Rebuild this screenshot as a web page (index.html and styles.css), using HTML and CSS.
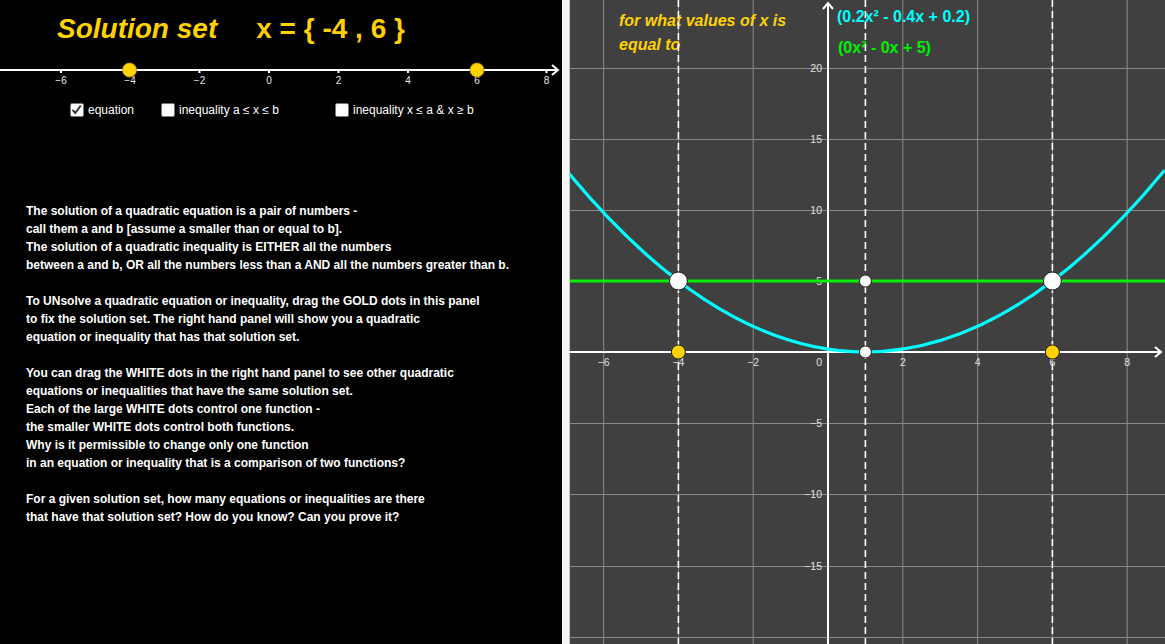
FILE: index.html
```html
<!DOCTYPE html>
<html>
<head>
<meta charset="utf-8">
<link rel="stylesheet" href="styles.css">
</head>
<body>
<div class="app">
  <section class="left">
    <div class="title">
      <span class="title-label">Solution set</span>
      <span class="title-set">x = { -4 , 6 }</span>
    </div>
    <svg class="numberline" width="562" height="30" viewBox="0 0 562 30">
      <line x1="0" y1="10" x2="558" y2="10" stroke="#fff" stroke-width="2"/>
      <polyline points="552,5 558,10 552,15" fill="none" stroke="#fff" stroke-width="2"/>
      <g stroke="#fff" stroke-width="2">
        <line x1="61" y1="10" x2="61" y2="13"/>
        <line x1="130" y1="10" x2="130" y2="13"/>
        <line x1="199.5" y1="10" x2="199.5" y2="13"/>
        <line x1="269" y1="10" x2="269" y2="13"/>
        <line x1="338.5" y1="10" x2="338.5" y2="13"/>
        <line x1="408" y1="10" x2="408" y2="13"/>
        <line x1="477" y1="10" x2="477" y2="13"/>
        <line x1="546.5" y1="10" x2="546.5" y2="13"/>
      </g>
      <g class="nl-labels" text-anchor="middle">
        <text x="61" y="24">−6</text>
        <text x="130" y="24">−4</text>
        <text x="199.5" y="24">−2</text>
        <text x="269" y="24">0</text>
        <text x="338.5" y="24">2</text>
        <text x="408" y="24">4</text>
        <text x="477" y="24">6</text>
        <text x="546.5" y="24">8</text>
      </g>
      <circle cx="129.5" cy="10" r="7" fill="#ffd200" stroke="#b8960a" stroke-width="0.8"/>
      <circle cx="477" cy="10" r="7" fill="#ffd200" stroke="#b8960a" stroke-width="0.8"/>
    </svg>
    <div class="checks">
      <label class="check">
        <span class="box"><svg width="13" height="13" viewBox="0 0 13 13"><polyline points="2.5,6.8 5.3,10 10.8,2.5" fill="none" stroke="#333" stroke-width="2"/></svg></span>
        <span>equation</span>
      </label>
      <label class="check">
        <span class="box"></span>
        <span>inequality a ≤ x ≤ b</span>
      </label>
      <label class="check">
        <span class="box"></span>
        <span>inequality x ≤ a &amp; x ≥ b</span>
      </label>
    </div>
    <div class="text">
      <p>The solution of a quadratic equation is a pair of numbers -<br>
      call them a and b [assume a smaller than or equal to b].<br>
      The solution of a quadratic inequality is EITHER all the numbers<br>
      between a and b, OR all the numbers less than a AND all the numbers greater than b.</p>
      <p>To UNsolve a quadratic equation or inequality, drag the GOLD dots in this panel<br>
      to fix the solution set. The right hand panel will show you a quadratic<br>
      equation or inequality that has that solution set.</p>
      <p>You can drag the WHITE dots in the right hand panel to see other quadratic<br>
      equations or inequalities that have the same solution set.<br>
      Each of the large WHITE dots control one function -<br>
      the smaller WHITE dots control both functions.<br>
      Why is it permissible to change only one function<br>
      in an equation or inequality that is a comparison of two functions?</p>
      <p>For a given solution set, how many equations or inequalities are there<br>
      that have that solution set? How do you know? Can you prove it?</p>
    </div>
  </section>
  <div class="divider"></div>
  <section class="graph">
    <svg width="595" height="644" viewBox="0 0 595 644">
      <rect width="595" height="644" fill="#404040"/>
      <g stroke="#8a8a8a" stroke-width="1">
        <line x1="33.6" y1="0" x2="33.6" y2="644"/>
        <line x1="108.4" y1="0" x2="108.4" y2="644"/>
        <line x1="183.2" y1="0" x2="183.2" y2="644"/>
        <line x1="332.8" y1="0" x2="332.8" y2="644"/>
        <line x1="407.6" y1="0" x2="407.6" y2="644"/>
        <line x1="482.4" y1="0" x2="482.4" y2="644"/>
        <line x1="557.2" y1="0" x2="557.2" y2="644"/>
        <line x1="0" y1="68.5" x2="595" y2="68.5"/>
        <line x1="0" y1="139.5" x2="595" y2="139.5"/>
        <line x1="0" y1="210.5" x2="595" y2="210.5"/>
        <line x1="0" y1="281.5" x2="595" y2="281.5"/>
        <line x1="0" y1="423.5" x2="595" y2="423.5"/>
        <line x1="0" y1="494.5" x2="595" y2="494.5"/>
        <line x1="0" y1="566.5" x2="595" y2="566.5"/>
        <line x1="0" y1="637.5" x2="595" y2="637.5"/>
      </g>
      <g stroke="#fff" stroke-width="2" fill="none">
        <line x1="0" y1="352" x2="591" y2="352"/>
        <polyline points="585,347 591,352 585,357"/>
        <line x1="258" y1="644" x2="258" y2="3"/>
        <polyline points="253,9 258,3 263,9"/>
      </g>
      <g class="ax-labels" text-anchor="middle">
        <text x="33.6" y="366">−6</text>
        <text x="108.4" y="366">−4</text>
        <text x="183.2" y="366">−2</text>
        <text x="332.8" y="366">2</text>
        <text x="407.6" y="366">4</text>
        <text x="482.4" y="366">6</text>
        <text x="557.2" y="366">8</text>
      </g>
      <g class="ax-labels" text-anchor="end">
        <text x="252" y="366">0</text>
        <text x="252" y="72">20</text>
        <text x="252" y="143">15</text>
        <text x="252" y="214">10</text>
        <text x="252" y="285">5</text>
        <text x="252" y="427">−5</text>
        <text x="252" y="498">−10</text>
        <text x="252" y="570">−15</text>
      </g>
      <text class="question" x="49" y="26">for what values of x is</text>
      <text class="question" x="49" y="50">equal to</text>
      <text class="fn fn-cyan" x="267" y="22">(0.2x² - 0.4x + 0.2)</text>
      <text class="fn fn-green" x="268" y="53">(0x² - 0x + 5)</text>
      <g stroke="#fff" stroke-width="1.6" stroke-dasharray="7 4">
        <line x1="108.4" y1="0" x2="108.4" y2="644"/>
        <line x1="295.4" y1="0" x2="295.4" y2="644"/>
        <line x1="482.4" y1="0" x2="482.4" y2="644"/>
      </g>
      <line x1="0" y1="281" x2="595" y2="281" stroke="#00f000" stroke-width="3.2"/>
      <path d="M -3.8 170.24 Q 295.4 533.76 594.6 170.24" fill="none" stroke="#00ffff" stroke-width="3.2"/>
      <g stroke="#222" stroke-width="1">
        <circle cx="108.4" cy="281" r="9" fill="#fff"/>
        <circle cx="482.4" cy="281" r="9" fill="#fff"/>
        <circle cx="295.4" cy="281" r="6" fill="#fff"/>
        <circle cx="295.4" cy="352" r="6" fill="#fff"/>
        <circle cx="108.4" cy="352" r="7" fill="#ffd200"/>
        <circle cx="482.4" cy="352" r="7" fill="#ffd200"/>
      </g>
    </svg>
  </section>
</div>
</body>
</html>
```

FILE: styles.css
```css
html, body {
  margin: 0;
  padding: 0;
  background: #404040;
}

.app {
  display: flex;
  width: 1165px;
  height: 644px;
  overflow: hidden;
  font-family: "Liberation Sans", Arial, sans-serif;
}

.left {
  width: 562px;
  flex: none;
  background: #000;
  color: #fff;
}

.title {
  display: flex;
  gap: 39px;
  padding: 13px 0 0 57px;
  height: 32px;
  line-height: 32px;
  font-size: 28px;
  font-weight: bold;
  color: #ffd200;
}

.title-label {
  font-style: italic;
}

.numberline {
  display: block;
  margin-top: 15px;
}

.nl-labels text {
  font-size: 10px;
  fill: #e8e8e8;
  font-family: "Liberation Sans", Arial, sans-serif;
}

.checks {
  display: grid;
  grid-template-columns: 91px 174px auto;
  margin-top: 13px;
  padding-left: 70px;
  height: 14px;
  font-size: 12px;
}

.check {
  display: flex;
  align-items: center;
  gap: 4px;
  color: #fff;
}

.box {
  width: 12px;
  height: 12px;
  flex: none;
  background: #fff;
  border: 1px solid #777;
  border-radius: 2px;
  box-sizing: content-box;
  display: flex;
}

.box svg {
  display: block;
  margin: -1px 0 0 -1px;
}

.text {
  margin-top: 85px;
  padding-left: 26px;
  font-size: 12px;
  font-weight: bold;
  line-height: 18px;
}

.text p {
  margin: 0 0 18px 0;
}

.divider {
  width: 7px;
  flex: none;
  background: #f6f6f6;
  border-right: 1px solid #c8c8c8;
}

.graph {
  flex: 1;
}

.graph svg {
  display: block;
}

.ax-labels text {
  font-size: 10.5px;
  fill: #e0e0e0;
  font-family: "Liberation Sans", Arial, sans-serif;
}

.question {
  font-size: 16px;
  font-weight: bold;
  font-style: italic;
  fill: #ffd200;
  font-family: "Liberation Sans", Arial, sans-serif;
}

.fn {
  font-size: 16px;
  font-weight: bold;
  font-family: "Liberation Sans", Arial, sans-serif;
}

.fn-cyan {
  fill: #00ffff;
}

.fn-green {
  fill: #00f000;
}
```
